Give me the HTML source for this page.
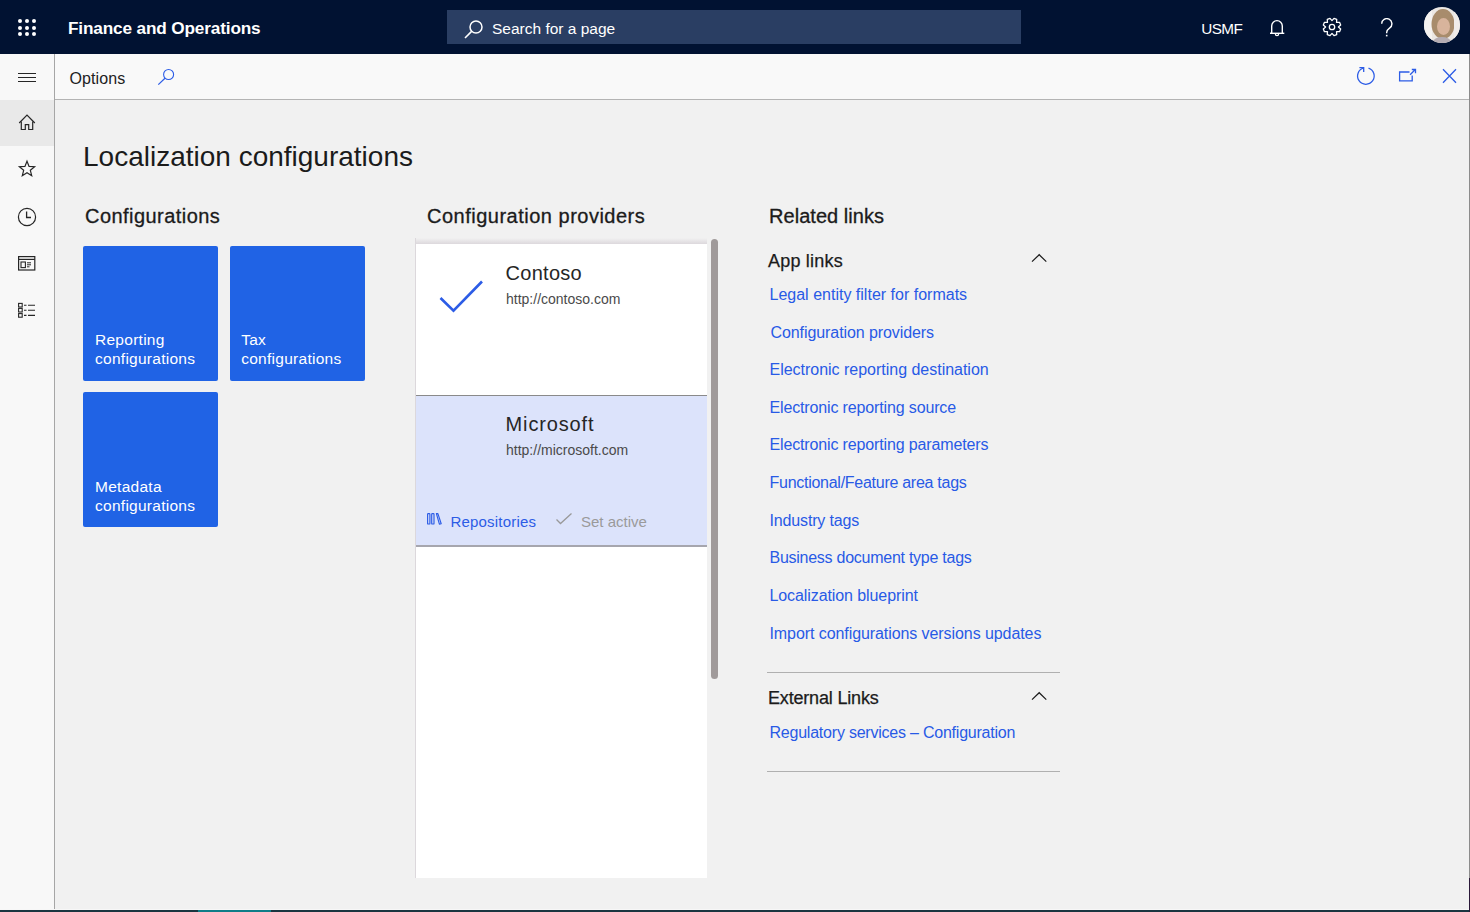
<!DOCTYPE html>
<html><head><meta charset="utf-8"><title>Localization configurations</title>
<style>
html,body{margin:0;padding:0;width:1470px;height:912px;overflow:hidden;background:#f1f1f1;font-family:"Liberation Sans",sans-serif}
.b{position:absolute}
.t{position:absolute;white-space:nowrap;line-height:1}
</style></head><body>
<div class="b" style="left:0px;top:0px;width:1470px;height:54px;background:#011232"></div>
<div class="b" style="left:0px;top:54px;width:54px;height:858px;background:#f8f8f8"></div>
<div class="b" style="left:54px;top:54px;width:1416px;height:45px;background:#f9f9f9"></div>
<div class="b" style="left:55px;top:100px;width:1415px;height:812px;background:#f1f1f1"></div>
<div class="b" style="left:54px;top:54px;width:1px;height:858px;background:#a6a6a6"></div>
<div class="b" style="left:55px;top:99px;width:1415px;height:1px;background:#b4b4b4"></div>
<div class="b" style="left:0px;top:100px;width:54px;height:46px;background:#e9e9e9"></div>
<div class="b" style="left:0px;top:909px;width:1470px;height:1px;background:#f7f7f7"></div>
<div class="b" style="left:0px;top:910px;width:1470px;height:2px;background:#1a3540"></div>
<div class="b" style="left:198px;top:910px;width:73px;height:2px;background:#0f7d88"></div>
<div class="b" style="left:1469px;top:54px;width:1px;height:824px;background:#8c8c8c"></div>
<div class="b" style="left:1469px;top:878px;width:1px;height:34px;background:#2a1838"></div>
<div class="b" style="left:18px;top:18.8px;width:4px;height:4px;background:#fff;border-radius:50%"></div>
<div class="b" style="left:18px;top:25.5px;width:4px;height:4px;background:#fff;border-radius:50%"></div>
<div class="b" style="left:18px;top:32.2px;width:4px;height:4px;background:#fff;border-radius:50%"></div>
<div class="b" style="left:24.9px;top:18.8px;width:4px;height:4px;background:#fff;border-radius:50%"></div>
<div class="b" style="left:24.9px;top:25.5px;width:4px;height:4px;background:#fff;border-radius:50%"></div>
<div class="b" style="left:24.9px;top:32.2px;width:4px;height:4px;background:#fff;border-radius:50%"></div>
<div class="b" style="left:31.799999999999997px;top:18.8px;width:4px;height:4px;background:#fff;border-radius:50%"></div>
<div class="b" style="left:31.799999999999997px;top:25.5px;width:4px;height:4px;background:#fff;border-radius:50%"></div>
<div class="b" style="left:31.799999999999997px;top:32.2px;width:4px;height:4px;background:#fff;border-radius:50%"></div>
<div class="t" style="left:68px;top:19.84px;font-size:17.2px;color:#fff;font-weight:bold;letter-spacing:-0.15px">Finance and Operations</div>
<div class="b" style="left:447px;top:10px;width:574px;height:34px;background:#2a3e63"></div>
<svg class="b" style="left:463px;top:18px" width="22" height="22" viewBox="0 0 22 22"><circle cx="13" cy="9" r="6" fill="none" stroke="#fff" stroke-width="1.5"/><line x1="8.6" y1="13.4" x2="2" y2="20" stroke="#fff" stroke-width="1.6"/></svg>
<div class="t" style="left:492px;top:20.88px;font-size:15.5px;color:#fff;font-weight:normal;">Search for a page</div>
<div class="t" style="left:1201.2px;top:21.25px;font-size:15.3px;color:#fff;font-weight:normal;letter-spacing:-0.55px">USMF</div>
<svg class="b" style="left:1268px;top:18px" width="20" height="20" viewBox="0 0 20 20"><path d="M3.7 15.3 V7.9 A5.3 5.3 0 0 1 14.3 7.9 V15.3" fill="none" stroke="#fff" stroke-width="1.4"/><line x1="2" y1="15.3" x2="16.3" y2="15.3" stroke="#fff" stroke-width="1.4"/><path d="M7.4 16 A1.6 1.6 0 0 0 10.6 16" fill="none" stroke="#fff" stroke-width="1.3"/></svg>
<svg class="b" style="left:1322.3px;top:16.9px" width="20" height="20" viewBox="0 0 20 20"><path d="M10.00 3.60 L12.00 1.33 L14.72 2.45 L14.53 5.47 L17.55 5.28 L18.67 8.00 L16.40 10.00 L18.67 12.00 L17.55 14.72 L14.53 14.53 L14.72 17.55 L12.00 18.67 L10.00 16.40 L8.00 18.67 L5.28 17.55 L5.47 14.53 L2.45 14.72 L1.33 12.00 L3.60 10.00 L1.33 8.00 L2.45 5.28 L5.47 5.47 L5.28 2.45 L8.00 1.33 Z" fill="none" stroke="#fff" stroke-width="1.3" stroke-linejoin="round"/><circle cx="10" cy="10" r="2.7" fill="none" stroke="#fff" stroke-width="1.3"/></svg>
<svg class="b" style="left:1378px;top:17.5px" width="18" height="22" viewBox="0 0 18 22"><path d="M3.7 5.8 A5.1 5.1 0 1 1 11.8 9.9 C10 11.2 8.7 12 8.7 14.3 V15.2" fill="none" stroke="#fff" stroke-width="1.4"/><rect x="7.9" y="16.8" width="1.6" height="1.6" fill="#fff"/></svg>
<svg class="b" style="left:1424px;top:7px" width="36" height="36" viewBox="0 0 36 36"><defs><clipPath id="cc"><circle cx="18" cy="18" r="18"/></clipPath></defs><g clip-path="url(#cc)"><rect width="36" height="36" fill="#ebe7e3"/><rect x="0" y="0" width="8" height="36" fill="#f4f2f0"/><ellipse cx="19" cy="17" rx="11.5" ry="15" fill="#a88c6c"/><ellipse cx="19.5" cy="19.5" rx="6.5" ry="8.5" fill="#d8b49c"/><ellipse cx="18" cy="35" rx="9" ry="5" fill="#b4acb2"/><rect x="30" y="0" width="6" height="36" fill="#f0ece9"/></g></svg>
<div class="b" style="left:18px;top:72.8px;width:18px;height:1.3px;background:#262626"></div>
<div class="b" style="left:18px;top:76.9px;width:18px;height:1.3px;background:#262626"></div>
<div class="b" style="left:18px;top:81px;width:18px;height:1.3px;background:#262626"></div>
<div class="t" style="left:69.4px;top:70.86px;font-size:16px;color:#222;font-weight:normal;letter-spacing:0.14px">Options</div>
<svg class="b" style="left:156px;top:67px" width="20" height="20" viewBox="0 0 20 20"><circle cx="12.6" cy="7.5" r="5" fill="none" stroke="#2c5ce6" stroke-width="1.1"/><line x1="9" y1="11.2" x2="2.3" y2="17.6" stroke="#2c5ce6" stroke-width="1.2"/></svg>
<svg class="b" style="left:1355px;top:65px" width="22" height="22" viewBox="0 0 22 22"><path d="M13.5 3.1 A8.3 8.3 0 1 1 8.6 3.0" fill="none" stroke="#2c5ce6" stroke-width="1.3"/><path d="M4.4 2.7 H8.7 V6.9" fill="none" stroke="#2c5ce6" stroke-width="1.3"/></svg>
<svg class="b" style="left:1396px;top:66px" width="22" height="18" viewBox="0 0 22 18"><path d="M13.5 6 H3.6 V14.8 H16.2 V9.6" fill="none" stroke="#2c5ce6" stroke-width="1.3"/><path d="M14.1 8.7 L19.3 3.5 M15.8 3.5 H19.5 V7.2" fill="none" stroke="#2c5ce6" stroke-width="1.3"/></svg>
<svg class="b" style="left:1442px;top:68px" width="16" height="16" viewBox="0 0 16 16"><path d="M1 1.2 L14 14.7 M14 1.2 L1 14.7" fill="none" stroke="#2c5ce6" stroke-width="1.3"/></svg>
<svg class="b" style="left:17px;top:112px" width="20" height="20" viewBox="0 0 20 20"><path d="M2.2 11 L10 3.2 L17.8 11" fill="none" stroke="#262626" stroke-width="1.2"/><path d="M4.3 9.5 V17.5 H8.3 V12.6 H11.7 V17.5 H15.7 V9.5" fill="none" stroke="#262626" stroke-width="1.2"/></svg>
<svg class="b" style="left:17px;top:159px" width="20" height="20" viewBox="0 0 20 20"><path d="M10.00 2.20 L12.06 7.37 L17.61 7.73 L13.33 11.28 L14.70 16.67 L10.00 13.70 L5.30 16.67 L6.67 11.28 L2.39 7.73 L7.94 7.37 Z" fill="none" stroke="#262626" stroke-width="1.2" stroke-linejoin="miter"/></svg>
<svg class="b" style="left:17px;top:207px" width="20" height="20" viewBox="0 0 20 20"><circle cx="10" cy="10" r="8.6" fill="none" stroke="#262626" stroke-width="1.2"/><path d="M9.6 4.5 V10.5 H14" fill="none" stroke="#262626" stroke-width="1.3"/></svg>
<svg class="b" style="left:17px;top:254px" width="20" height="20" viewBox="0 0 20 20"><rect x="1.6" y="2.6" width="16.2" height="13.4" fill="none" stroke="#262626" stroke-width="1.2"/><line x1="1.6" y1="5.4" x2="17.8" y2="5.4" stroke="#262626" stroke-width="1.2"/><rect x="4" y="8" width="4.4" height="5.6" fill="none" stroke="#262626" stroke-width="1.1"/><path d="M10 8.8 H14 M10 10.8 H14 M10 12.8 H12.5" stroke="#262626" stroke-width="1"/></svg>
<svg class="b" style="left:17px;top:300px" width="20" height="20" viewBox="0 0 20 20"><rect x="1.6" y="3.4" width="3.6" height="3.6" fill="none" stroke="#262626" stroke-width="1.1"/><path d="M7 5.2 H9.5 M11 5.2 H18" stroke="#262626" stroke-width="1.1"/><rect x="1.6" y="8.4" width="3.6" height="3.6" fill="none" stroke="#262626" stroke-width="1.1"/><path d="M7 10.200000000000001 H9.5 M11 10.200000000000001 H18" stroke="#262626" stroke-width="1.1"/><rect x="1.6" y="13.6" width="3.6" height="3.6" fill="none" stroke="#262626" stroke-width="1.1"/><path d="M7 15.4 H9.5 M11 15.4 H18" stroke="#262626" stroke-width="1.1"/></svg>
<div class="t" style="left:83px;top:143.30px;font-size:28px;color:#1b1b1b;font-weight:normal;">Localization configurations</div>
<div class="t" style="left:85px;top:206.07px;font-size:20px;color:#1b1b1b;font-weight:normal;letter-spacing:0.45px;-webkit-text-stroke:0.3px #1b1b1b">Configurations</div>
<div class="t" style="left:427px;top:206.07px;font-size:20px;color:#1b1b1b;font-weight:normal;letter-spacing:0.5px;-webkit-text-stroke:0.3px #1b1b1b">Configuration providers</div>
<div class="t" style="left:769px;top:206.07px;font-size:20px;color:#1b1b1b;font-weight:normal;letter-spacing:0.04px;-webkit-text-stroke:0.3px #1b1b1b">Related links</div>
<div class="b" style="left:83px;top:246px;width:135px;height:135px;background:#2063e5;border-radius:2px"></div>
<div class="t" style="left:95px;top:332.28px;font-size:15.5px;color:#fff;font-weight:normal;letter-spacing:0.27px">Reporting</div>
<div class="t" style="left:95px;top:351.28px;font-size:15.5px;color:#fff;font-weight:normal;letter-spacing:0.27px">configurations</div>
<div class="b" style="left:230px;top:246px;width:135px;height:135px;background:#2063e5;border-radius:2px"></div>
<div class="t" style="left:241.2px;top:332.28px;font-size:15.5px;color:#fff;font-weight:normal;letter-spacing:0.27px">Tax</div>
<div class="t" style="left:241.2px;top:351.28px;font-size:15.5px;color:#fff;font-weight:normal;letter-spacing:0.27px">configurations</div>
<div class="b" style="left:83px;top:392px;width:135px;height:135px;background:#2063e5;border-radius:2px"></div>
<div class="t" style="left:95px;top:479.28px;font-size:15.5px;color:#fff;font-weight:normal;letter-spacing:0.27px">Metadata</div>
<div class="t" style="left:95px;top:498.28px;font-size:15.5px;color:#fff;font-weight:normal;letter-spacing:0.27px">configurations</div>
<div class="b" style="left:415px;top:238px;width:1px;height:640px;background:#dcd8dc"></div>
<div class="b" style="left:416px;top:238px;width:291px;height:6px;background:linear-gradient(#f1f1f1,#dcd8dc)"></div>
<div class="b" style="left:416px;top:244px;width:291px;height:634px;background:#fff"></div>
<div class="b" style="left:416px;top:395px;width:291px;height:1px;background:#8a8a8a"></div>
<div class="b" style="left:416px;top:396px;width:291px;height:149px;background:#dce3fb"></div>
<div class="b" style="left:416px;top:545px;width:291px;height:1.5px;background:#a6a6ae"></div>
<div class="b" style="left:711px;top:239px;width:7px;height:440px;background:#a09a9a;border-radius:3.5px"></div>
<svg class="b" style="left:438px;top:278px" width="48" height="36" viewBox="0 0 48 36"><path d="M2.5 20 L15.5 32.6 L44 3.5" fill="none" stroke="#2c5ce6" stroke-width="2.6"/></svg>
<div class="t" style="left:505.6px;top:262.57px;font-size:20px;color:#262626;font-weight:normal;letter-spacing:0.27px">Contoso</div>
<div class="t" style="left:506px;top:292.15px;font-size:14px;color:#4a4a4a;font-weight:normal;">http://contoso.com</div>
<div class="t" style="left:505.6px;top:414.07px;font-size:20px;color:#262626;font-weight:normal;letter-spacing:0.84px">Microsoft</div>
<div class="t" style="left:506px;top:443.15px;font-size:14px;color:#4a4a4a;font-weight:normal;">http://microsoft.com</div>
<svg class="b" style="left:426px;top:512px" width="17" height="14" viewBox="0 0 17 14"><rect x="1.6" y="1.6" width="2.3" height="10.4" rx="0.6" fill="none" stroke="#2c5ce6" stroke-width="1.15"/><rect x="5.7" y="1.6" width="2.3" height="10.4" rx="0.6" fill="none" stroke="#2c5ce6" stroke-width="1.15"/><path d="M10.4 1.6 L11.9 1.6 L15.2 11.8 L13.4 12.2 Z" fill="none" stroke="#2c5ce6" stroke-width="1.15" stroke-linejoin="round"/></svg>
<div class="t" style="left:450.5px;top:514.00px;font-size:15px;color:#2c5ce6;font-weight:normal;letter-spacing:0.19px">Repositories</div>
<svg class="b" style="left:555px;top:512px" width="18" height="14" viewBox="0 0 18 14"><path d="M1.5 7.5 L5.5 11.5 L16.5 1.5" fill="none" stroke="#999" stroke-width="1.3"/></svg>
<div class="t" style="left:581px;top:514.00px;font-size:15px;color:#9a9a9a;font-weight:normal;">Set active</div>
<div class="t" style="left:768px;top:251.66px;font-size:18px;color:#1b1b1b;font-weight:normal;letter-spacing:0.2px;-webkit-text-stroke:0.25px #1b1b1b">App links</div>
<svg class="b" style="left:1030px;top:253px" width="18" height="10" viewBox="0 0 18 10"><path d="M2 8.6 L9.2 1.7 L16.3 8.6" fill="none" stroke="#1b1b1b" stroke-width="1.2"/></svg>
<div class="t" style="left:769.5px;top:286.86px;font-size:16px;color:#285ae6;font-weight:normal;letter-spacing:0.006px">Legal entity filter for formats</div>
<div class="t" style="left:770.5px;top:324.86px;font-size:16px;color:#285ae6;font-weight:normal;letter-spacing:-0.083px">Configuration providers</div>
<div class="t" style="left:769.5px;top:361.86px;font-size:16px;color:#285ae6;font-weight:normal;letter-spacing:-0.016px">Electronic reporting destination</div>
<div class="t" style="left:769.5px;top:399.86px;font-size:16px;color:#285ae6;font-weight:normal;letter-spacing:-0.143px">Electronic reporting source</div>
<div class="t" style="left:769.5px;top:436.86px;font-size:16px;color:#285ae6;font-weight:normal;letter-spacing:-0.144px">Electronic reporting parameters</div>
<div class="t" style="left:769.5px;top:474.86px;font-size:16px;color:#285ae6;font-weight:normal;letter-spacing:-0.269px">Functional/Feature area tags</div>
<div class="t" style="left:769.5px;top:512.86px;font-size:16px;color:#285ae6;font-weight:normal;letter-spacing:-0.15px">Industry tags</div>
<div class="t" style="left:769.5px;top:549.86px;font-size:16px;color:#285ae6;font-weight:normal;letter-spacing:-0.258px">Business document type tags</div>
<div class="t" style="left:769.5px;top:587.86px;font-size:16px;color:#285ae6;font-weight:normal;letter-spacing:-0.089px">Localization blueprint</div>
<div class="t" style="left:769.5px;top:625.86px;font-size:16px;color:#285ae6;font-weight:normal;letter-spacing:-0.079px">Import configurations versions updates</div>
<div class="b" style="left:767px;top:672px;width:293px;height:1px;background:#b0b0b0"></div>
<div class="t" style="left:768px;top:689.26px;font-size:18px;color:#1b1b1b;font-weight:normal;letter-spacing:-0.18px;-webkit-text-stroke:0.25px #1b1b1b">External Links</div>
<svg class="b" style="left:1030px;top:691px" width="18" height="10" viewBox="0 0 18 10"><path d="M2 8.6 L9.2 1.7 L16.3 8.6" fill="none" stroke="#1b1b1b" stroke-width="1.2"/></svg>
<div class="t" style="left:769.5px;top:724.86px;font-size:16px;color:#285ae6;font-weight:normal;letter-spacing:-0.222px">Regulatory services – Configuration</div>
<div class="b" style="left:767px;top:771px;width:293px;height:1px;background:#b0b0b0"></div>
</body></html>
